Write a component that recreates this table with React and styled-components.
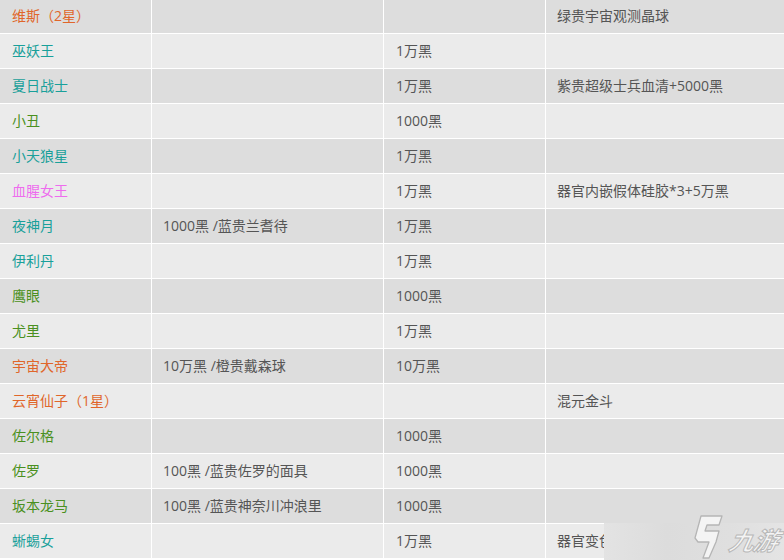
import React from "react";
import styled, { createGlobalStyle } from "styled-components";

const Global = createGlobalStyle`
  html, body { margin: 0; padding: 0; background: #ffffff; }
  body { width: 784px; height: 560px; overflow: hidden; }
  #root { width: 784px; height: 560px; overflow: hidden; position: relative; }
`;

const Table = styled.div`
  display: flex;
  flex-direction: column;
  gap: 1px;
  margin-top: -1px;
  background: #ffffff;
  font-family: "Open Sans", "Noto Sans CJK SC", sans-serif;
  font-size: 14px;
`;

const Row = styled.div`
  display: grid;
  grid-template-columns: 151px 231px 161px 1fr;
  gap: 1px;
  height: 34px;
`;

const Cell = styled.div`
  background: ${(p) => (p.$dark ? "#dddddd" : "#ebebeb")};
  color: ${(p) => p.$color || "#555555"};
  padding: 0 ${(p) => (p.$first ? "12px" : "11px")} 2px;
  display: flex;
  align-items: center;
  white-space: nowrap;
  overflow: hidden;
`;

const Watermark = styled.div`
  position: absolute;
  left: 604px;
  top: 523px;
  width: 180px;
  height: 37px;
  background: linear-gradient(90deg, #e3e3e3 0%, #dcdcdc 35%, #dfdfdf 70%, #e4e4e4 100%);
`;

const Logo = styled.div`
  position: absolute;
  left: 692px;
  top: 514px;
  display: flex;
  align-items: center;
  gap: 6px;
`;

const LogoText = styled.span`
  font-family: "Noto Sans CJK SC", sans-serif;
  font-size: 25px;
  font-weight: 700;
  font-style: italic;
  color: #f4f4f4;
  -webkit-text-stroke: 1px #b8b8b8;
  transform: skewX(-12deg);
  letter-spacing: -1px;
  margin-top: 4px;
`;

const ORANGE = "#e0662a";
const TEAL = "#19a09a";
const GREEN = "#4a9020";
const PINK = "#ee6cee";

const rows = [
  ["维斯（2星）", ORANGE, "", "", "绿贵宇宙观测晶球"],
  ["巫妖王", TEAL, "", "1万黑", ""],
  ["夏日战士", TEAL, "", "1万黑", "紫贵超级士兵血清+5000黑"],
  ["小丑", GREEN, "", "1000黑", ""],
  ["小天狼星", TEAL, "", "1万黑", ""],
  ["血腥女王", PINK, "", "1万黑", "器官内嵌假体硅胶*3+5万黑"],
  ["夜神月", TEAL, "1000黑 /蓝贵兰耆待", "1万黑", ""],
  ["伊利丹", TEAL, "", "1万黑", ""],
  ["鹰眼", GREEN, "", "1000黑", ""],
  ["尤里", GREEN, "", "1万黑", ""],
  ["宇宙大帝", ORANGE, "10万黑 /橙贵戴森球", "10万黑", ""],
  ["云宵仙子（1星）", ORANGE, "", "", "混元金斗"],
  ["佐尔格", GREEN, "", "1000黑", ""],
  ["佐罗", GREEN, "100黑 /蓝贵佐罗的面具", "1000黑", ""],
  ["坂本龙马", GREEN, "100黑 /蓝贵神奈川冲浪里", "1000黑", ""],
  ["蜥蜴女", TEAL, "", "1万黑", "器官变色龙皮肤"],
];

export default function App() {
  return (
    <>
      <Global />
      <Table>
        {rows.map(([name, color, a, b, c], i) => {
          const dark = i % 2 === 0;
          return (
            <Row key={i}>
              <Cell $dark={dark} $color={color} $first>{name}</Cell>
              <Cell $dark={dark}>{a}</Cell>
              <Cell $dark={dark} $first>{b}</Cell>
              <Cell $dark={dark}>{c}</Cell>
            </Row>
          );
        })}
      </Table>
      <Watermark />
      <Logo>
        <svg width="32" height="46" viewBox="0 0 32 46">
          <path
            d="M9 2 L30 2 L27 11 L15 11 L13 17 L27 17 L24 28 L17 44 L11 44 L17 28 L6 28 L3 24 Z"
            fill="#f4f4f4"
            stroke="#b5b5b5"
            strokeWidth="1.3"
            strokeLinejoin="round"
          />
        </svg>
        <LogoText>九游</LogoText>
      </Logo>
    </>
  );
}
